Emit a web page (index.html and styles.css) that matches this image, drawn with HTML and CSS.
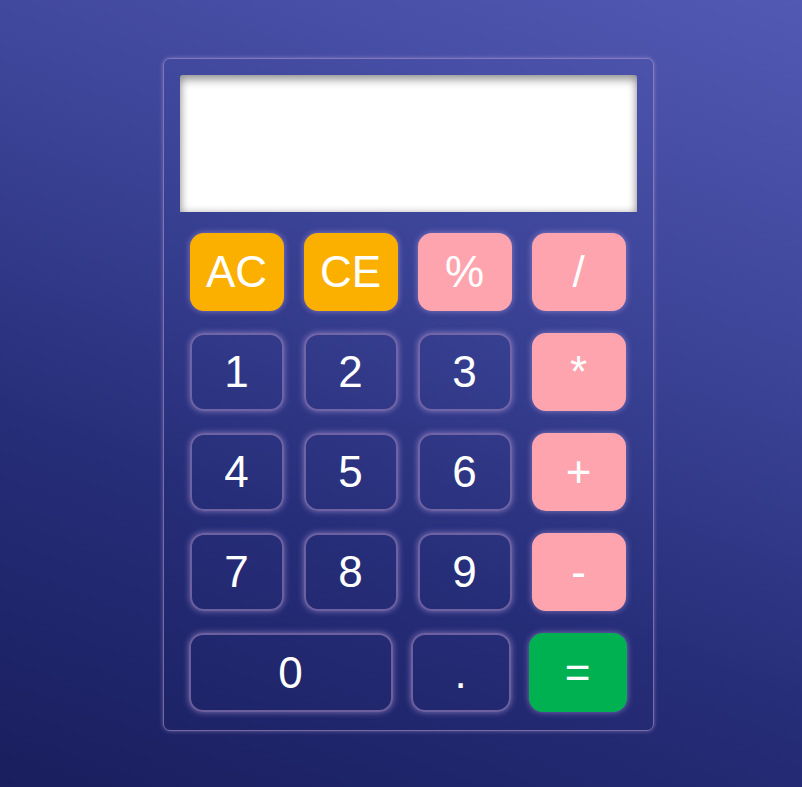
FILE: index.html
```html
<!DOCTYPE html>
<html lang="en">
<head>
<meta charset="utf-8">
<title>Calculator</title>
<link rel="stylesheet" href="styles.css">
</head>
<body>
<main class="page">
  <div class="calc">
    <div class="display"></div>
    <div class="keys">
      <button class="key key-clear">AC</button>
      <button class="key key-clear">CE</button>
      <button class="key key-op">%</button>
      <button class="key key-op">/</button>
      <button class="key">1</button>
      <button class="key">2</button>
      <button class="key">3</button>
      <button class="key key-op">*</button>
      <button class="key">4</button>
      <button class="key">5</button>
      <button class="key">6</button>
      <button class="key key-op">+</button>
      <button class="key">7</button>
      <button class="key">8</button>
      <button class="key">9</button>
      <button class="key key-op">-</button>
    </div>
    <div class="last-row">
      <button class="key key-zero">0</button>
      <button class="key key-dot">.</button>
      <button class="key key-eq">=</button>
    </div>
  </div>
</main>
</body>
</html>
```

FILE: styles.css
```css
html, body {
  margin: 0;
  height: 100%;
}
body {
  background: linear-gradient(200deg, #5259b3 0%, #3c4498 35%, #272e79 65%, #191e5e 100%);
  font-family: "Liberation Sans", Arial, sans-serif;
}
.page {
  display: flex;
  justify-content: center;
  padding: 58px 0 0 14px;
}
.calc {
  width: 457px;
  padding: 16px 16px 18px;
  border: 1px solid rgba(175, 150, 205, 0.6);
  border-radius: 7px;
  box-shadow: 0 0 4px rgba(200, 175, 235, 0.45);
  display: flex;
  flex-direction: column;
}
.display {
  height: 137px;
  background: #fff;
  border-radius: 3px 3px 0 0;
  box-shadow: inset 0 5px 10px rgba(0, 0, 0, 0.35), inset 0 0 8px rgba(0, 0, 0, 0.2);
}
.keys {
  margin: 21px 11px 0 10px;
  display: grid;
  grid-template-columns: repeat(4, 94px);
  grid-auto-rows: 78px;
  column-gap: 20px;
  row-gap: 22px;
}
.last-row {
  margin: 22px 10px 0 9px;
  display: flex;
  gap: 18px;
  height: 79px;
}
.key {
  box-sizing: border-box;
  margin: 0;
  padding: 0;
  border: 2px solid rgba(140, 120, 180, 0.7);
  border-radius: 14px;
  background: transparent;
  color: #fff;
  font-family: "Liberation Sans", Arial, sans-serif;
  font-size: 44px;
  line-height: 1;
  box-shadow: 0 0 6px rgba(205, 175, 235, 0.55);
  display: flex;
  align-items: center;
  justify-content: center;
}
.key-clear {
  background: #fbb000;
  border-color: #fbb000;
}
.key-op {
  background: #fea4ae;
  border-color: #fea4ae;
}
.key-zero {
  width: 204px;
}
.key-dot {
  width: 100px;
}
.key-eq {
  width: 98px;
  background: #00b152;
  border-color: #00b152;
}
```
